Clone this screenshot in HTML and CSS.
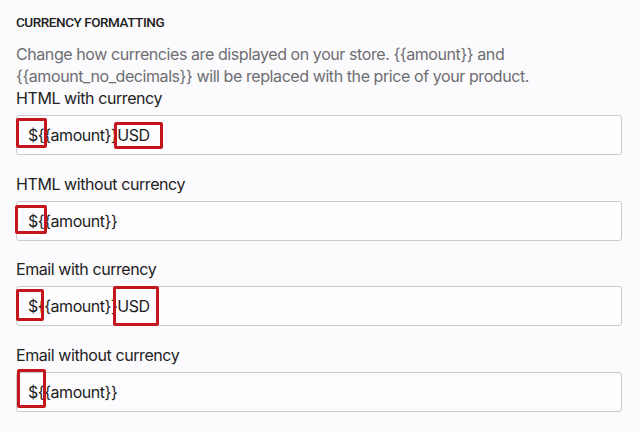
FILE: index.html
```html
<!DOCTYPE html>
<html>
<head>
<meta charset="utf-8">
<link rel="stylesheet" href="styles.css">
</head>
<body>
<section class="panel">
  <h2 class="title">CURRENCY FORMATTING</h2>
  <p class="desc">Change how currencies are displayed on your store. {{amount}} and {{amount_no_decimals}} will be replaced with the price of your product.</p>

  <div class="group">
    <label class="label">HTML with currency</label>
    <div class="field"><span class="value">${{amount}}USD</span>
      <span class="mark m1a"></span><span class="mark m1b"></span></div>
  </div>

  <div class="group">
    <label class="label">HTML without currency</label>
    <div class="field"><span class="value">${{amount}}</span>
      <span class="mark m2a"></span></div>
  </div>

  <div class="group">
    <label class="label">Email with currency</label>
    <div class="field"><span class="value">${{amount}}USD</span>
      <span class="mark m3a"></span><span class="mark m3b"></span></div>
  </div>

  <div class="group">
    <label class="label">Email without currency</label>
    <div class="field"><span class="value">${{amount}}</span>
      <span class="mark m4a"></span></div>
  </div>
</section>
</body>
</html>
```

FILE: styles.css
```css
html, body {
  margin: 0;
  padding: 0;
  background: #fbfafc;
}
body {
  font-family: Inter, "Noto Sans", sans-serif;
  color: #222;
  width: 640px;
  height: 432px;
  overflow: hidden;
}
.panel {
  padding: 13px 18px 0 16px;
}
.title {
  margin: 0;
  font-family: Roboto, Inter, sans-serif;
  font-size: 13.5px;
  line-height: 18px;
  font-weight: 500;
  letter-spacing: -0.45px;
  color: #222;
}
.desc {
  margin: 12px 0 0;
  font-size: 16px;
  line-height: 22px;
  letter-spacing: -0.42px;
  color: #6e6e72;
}
.group {
  display: flex;
  flex-direction: column;
  margin-bottom: 17.5px;
}
.label {
  font-size: 16px;
  line-height: 22px;
  letter-spacing: -0.42px;
  color: #222;
}
.field {
  position: relative;
  margin-top: 6px;
  height: 38px;
  border: 1px solid #cbcbce;
  border-radius: 3px;
  background: #fdfcfe;
  display: flex;
  align-items: center;
  padding-left: 11px;
}
.value {
  font-size: 16px;
  color: #1c1c1c;
  letter-spacing: -0.45px;
}
.mark {
  position: absolute;
  border: 3px solid #c3151b;
  border-radius: 2px;
  box-sizing: border-box;
}
.m1a { left: -1px; top: 2px; width: 31px; height: 30px; }
.m1b { left: 97px; top: 6px; width: 49px; height: 27px; }
.m2a { left: -2px; top: 3px; width: 32px; height: 29px; }
.m3a { left: -1px; top: 2px; width: 28px; height: 32px; }
.m3b { left: 96px; top: -1px; width: 46px; height: 40px; }
.m4a { left: 0px; top: -4px; width: 29px; height: 39px; }
```
